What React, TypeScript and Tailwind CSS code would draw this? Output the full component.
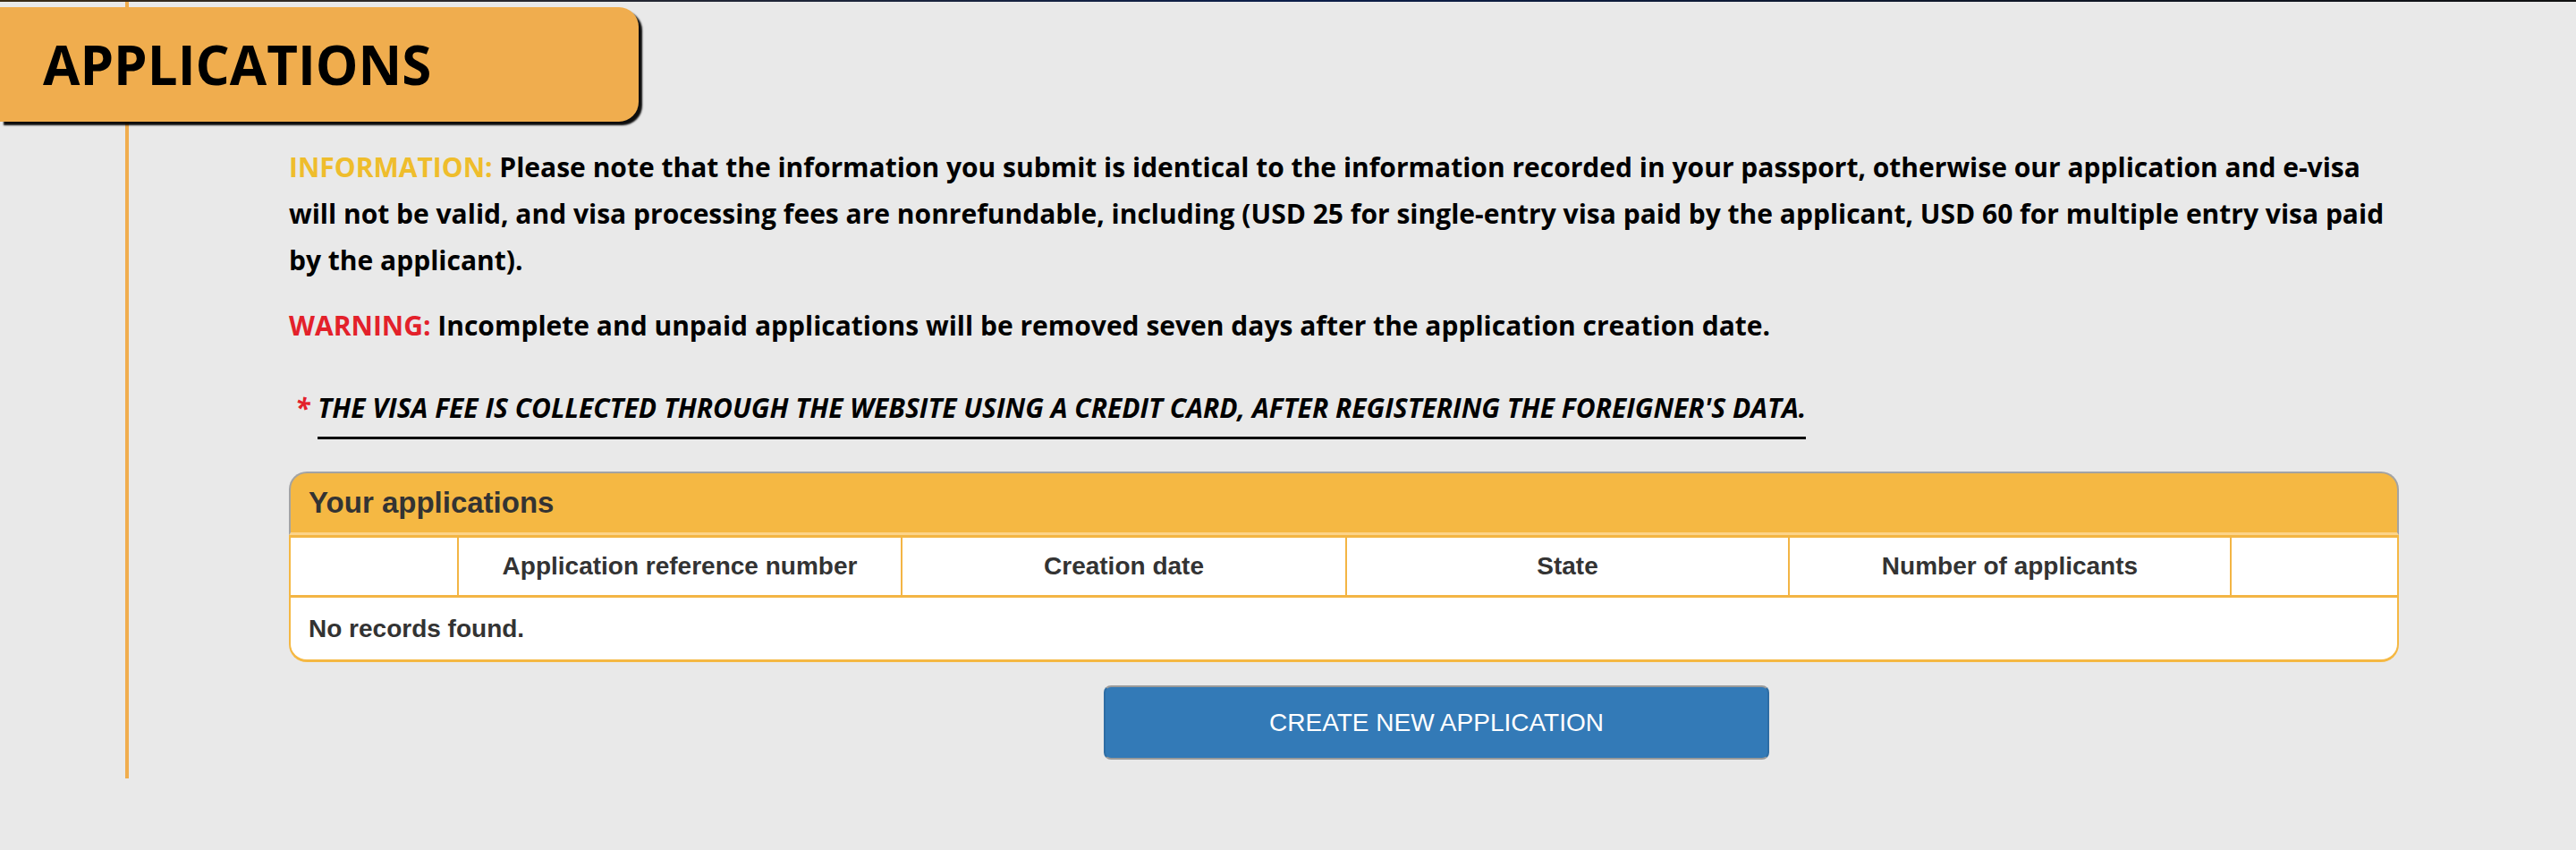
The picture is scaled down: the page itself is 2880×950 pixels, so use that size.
import React from "react";

export default function App() {
  const heads = ["", "Application reference number", "Creation date", "State", "Number of applicants", ""];
  const widths = ["w-[188px]", "w-[496px]", "w-[497px]", "w-[495px]", "w-[494px]", ""];
  return (
    <div className="min-h-[950px] w-[2880px] bg-[#e9e9e9] relative overflow-hidden">
      <div className="h-[2px] w-full bg-gradient-to-r from-[#3a2a14] via-[#0b1e4a] to-[#111]" />
      {/* Title tab overlaying the vertical rule */}
      <div
        className="absolute left-0 top-[8px] z-10 flex h-[128px] w-[714px] items-center rounded-r-[22px] bg-[#f0ad4e] pl-[48px] shadow-[4px_4px_2px_rgba(0,0,0,0.95)]"
        style={{ fontFamily: "'Open Sans', sans-serif" }}
      >
        <span className="text-[60px] font-bold leading-none text-black">APPLICATIONS</span>
      </div>
      <div className="flex">
        <div className="w-[140px] shrink-0" />
        <div className="h-[868px] w-[4px] shrink-0 bg-[#f0ad4e]" />
        <div className="flex w-[2539px] flex-col pl-[179px] pt-[159px]" style={{ fontFamily: "'Open Sans', sans-serif" }}>
          <p className="text-[30px] font-bold leading-[52px] text-black">
            <span className="text-[#efbd2c]">INFORMATION:</span> Please note that the information you submit is identical to the information recorded in your passport, otherwise our application and e-visa will not be valid, and visa processing fees are nonrefundable, including (USD 25 for single-entry visa paid by the applicant, USD 60 for multiple entry visa paid by the applicant).
          </p>
          <p className="mt-[21px] text-[30px] font-bold leading-[52px] text-black">
            <span className="text-[#e3212b]">WARNING:</span> Incomplete and unpaid applications will be removed seven days after the application creation date.
          </p>
          <div className="mt-[44px] flex items-start pl-[7px]">
            <span className="mr-[9px] text-[30px] font-bold italic leading-[44px] text-[#e3212b]">*</span>
            <span className="border-b-[3px] border-black pb-[10px] text-[30px] font-bold italic leading-[44px] text-black">
              THE VISA FEE IS COLLECTED THROUGH THE WEBSITE USING A CREDIT CARD, AFTER REGISTERING THE FOREIGNER'S DATA.
            </span>
          </div>
          {/* Panel */}
          <div className="mt-[36px] w-[2359px]" style={{ fontFamily: "'Liberation Sans', Arial, sans-serif" }}>
            <div className="flex h-[71px] items-center rounded-t-[20px] border-x-2 border-t-2 border-[#a3a3a3] border-b-[3px] border-b-[#fcd48a] bg-[#f5b843] pl-[20px]">
              <span className="text-[33px] font-bold text-[#333]">Your applications</span>
            </div>
            <div className="overflow-hidden rounded-b-[20px] border-x-2 border-b-[3px] border-[#f5b843] bg-white">
              <div className="flex h-[70px] border-y-[3px] border-[#f3b544]">
                {heads.map((h, i) => (
                  <div
                    key={i}
                    className={`${widths[i]} ${i === 5 ? "flex-1" : "border-r-2 border-[#f3b544]"} flex items-center justify-center text-[28px] font-bold text-[#333]`}
                  >
                    {h}
                  </div>
                ))}
              </div>
              <div className="flex h-[69px] items-center pl-[20px] text-[28px] font-bold text-[#333]">No records found.</div>
            </div>
          </div>
          <div className="mt-[26px] flex pl-[911px]">
            <button
              className="flex h-[83px] w-[744px] items-center justify-center rounded-[8px] border-2 border-[#2e6da4] border-y-[#9a9a9a] bg-[#337ab7] text-[28px] text-white"
              style={{ fontFamily: "'Liberation Sans', Arial, sans-serif" }}
            >
              CREATE NEW APPLICATION
            </button>
          </div>
        </div>
      </div>
    </div>
  );
}
